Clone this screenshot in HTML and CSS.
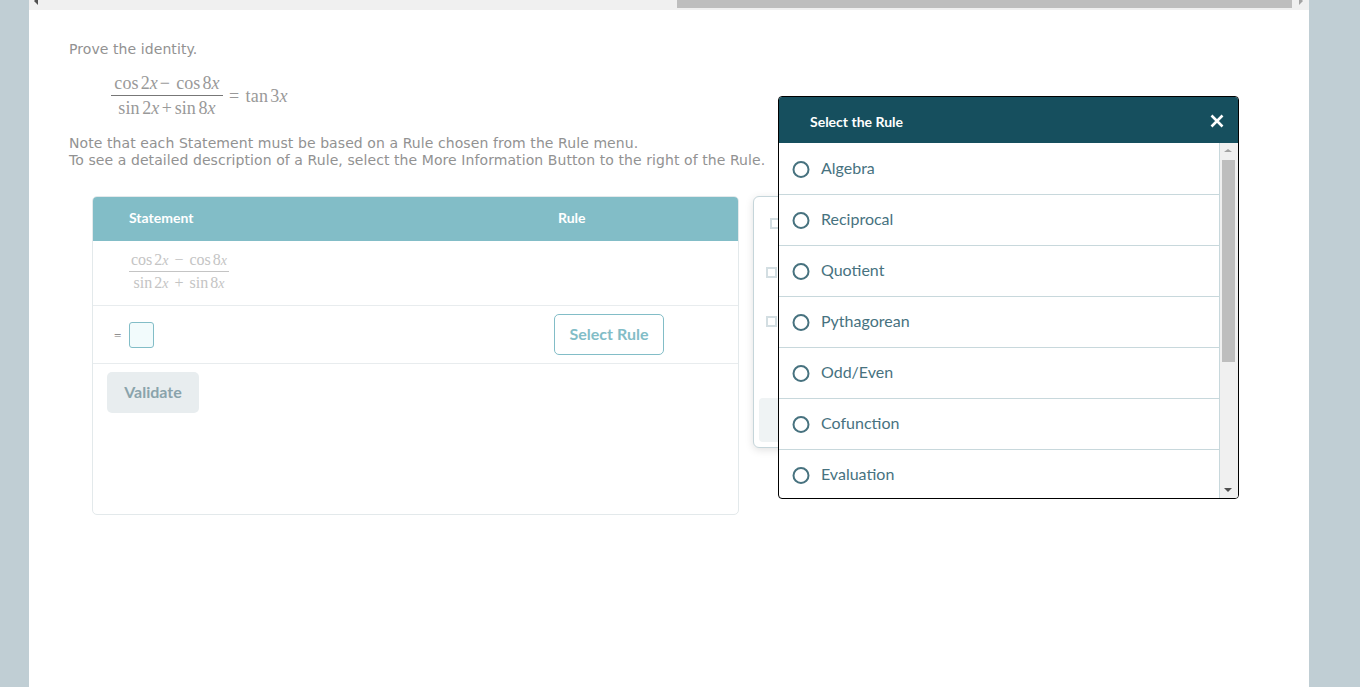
FILE: index.html
```html
<!DOCTYPE html>
<html lang="en">
<head>
  <meta charset="UTF-8" />
  <title>Prove the identity</title>
  <link rel="stylesheet" href="styles.css">
</head>
<body>

<div class="page">
  <!-- Top scrollbar -->
  <div class="hscroll">
    <span class="arrow-left"></span>
    <span class="hscroll-thumb"></span>
    <span class="arrow-right"></span>
  </div>

  <div class="question">
    <p class="prompt">Prove the identity.</p>
    <div class="math identity">
      <span class="frac">
        <span class="num">cos<i class="sp"></i>2<em>x</em><i class="sp"></i>&minus;<i class="sp-w"></i>cos<i class="sp"></i>8<em>x</em></span>
        <span class="den">sin<i class="sp"></i>2<em>x</em><i class="sp"></i>+<i class="sp"></i>sin<i class="sp"></i>8<em>x</em></span>
      </span>
      <span class="rhs">=<i class="sp-w"></i>tan<i class="sp"></i>3<em>x</em></span>
    </div>
    <p class="note">Note that each Statement must be based on a Rule chosen from the Rule menu.<br>To see a detailed description of a Rule, select the More Information Button to the right of the Rule.</p>
  </div>

  <div class="work">
    <div class="proof">
      <div class="proof-head">
        <span class="col-statement">Statement</span>
        <span>Rule</span>
      </div>
      <div class="proof-row first-row">
        <div class="math given">
          <span class="frac">
            <span class="num">cos<i class="sp"></i>2<em>x</em><i class="sp-w"></i>&minus;<i class="sp-w"></i>cos<i class="sp"></i>8<em>x</em></span>
            <span class="den">sin<i class="sp"></i>2<em>x</em><i class="sp-w"></i>+<i class="sp-w"></i>sin<i class="sp"></i>8<em>x</em></span>
          </span>
        </div>
      </div>
      <div class="proof-row input-row">
        <div class="statement-input">
          <span class="equals">=</span>
          <span class="answer-box"></span>
        </div>
        <button class="btn-rule">Select Rule</button>
      </div>
      <button class="btn-validate">Validate</button>
    </div>

    <!-- Palette behind the dialog -->
    <div class="palette">
      <span class="check check-a"></span>
      <span class="check check-b"></span>
      <span class="check check-c"></span>
      <span class="palette-btn"></span>
    </div>
  </div>

  <!-- Rule dialog -->
  <div class="dialog">
    <div class="dialog-head">
      <span>Select the Rule</span>
      <svg class="close" width="14" height="14" viewBox="0 0 14 14"><path d="M1.5 1.5L12.5 12.5M12.5 1.5L1.5 12.5" stroke="#fff" stroke-width="2.6" fill="none"/></svg>
    </div>
    <div class="dialog-body">
      <ul class="rules">
        <li><span class="radio"></span>Algebra</li>
        <li><span class="radio"></span>Reciprocal</li>
        <li><span class="radio"></span>Quotient</li>
        <li><span class="radio"></span>Pythagorean</li>
        <li><span class="radio"></span>Odd/Even</li>
        <li><span class="radio"></span>Cofunction</li>
        <li><span class="radio"></span>Evaluation</li>
      </ul>
      <div class="vscroll">
        <span class="arrow-up"></span>
        <span class="vscroll-thumb"></span>
        <span class="arrow-down"></span>
      </div>
    </div>
  </div>
</div>

</body>
</html>
```

FILE: styles.css
```css
/* Global styles */
html, body {
  height: 100%;
}

body {
  margin: 0;
  overflow: hidden;
  background-color: #c0ced4;
  font-family: "Lato", "Open Sans", sans-serif;
}

.page {
  position: relative;
  width: 1280px;
  height: 687px;
  margin-left: 29px;
  background-color: #fff;
}

/* Top scrollbar */
.hscroll {
  display: flex;
  height: 10px;
  background-color: #f0f0f0;
}

.hscroll-thumb {
  width: 615px;
  height: 8px;
  margin-left: 639px;
  background-color: #bebebe;
}

.arrow-left {
  width: 0;
  height: 0;
  margin-left: 5px;
  border-top: 4px solid transparent;
  border-bottom: 4px solid transparent;
  border-right: 4px solid #505050;
  transform: translateY(-3px);
}

.arrow-right {
  width: 0;
  height: 0;
  margin-left: 7px;
  border-top: 4px solid transparent;
  border-bottom: 4px solid transparent;
  border-left: 4px solid #a3a3a3;
  transform: translateY(-3px);
}

/* Question text */
.question {
  padding: 31px 0 0 40px;
  font-family: "DejaVu Sans", Verdana, sans-serif;
  font-size: 14px;
  letter-spacing: 0.08px;
  line-height: 17px;
  color: #929292;
}

.prompt {
  margin: 0;
}

.note {
  margin: 0;
  padding-top: 15px;
}

.math {
  font-family: "Liberation Serif", serif;
  letter-spacing: 0;
  color: #999;
}

.math em {
  font-style: italic;
}

.sp {
  display: inline-block;
  width: 2px;
}

.sp-w {
  display: inline-block;
  width: 6px;
}

.frac {
  display: inline-flex;
  flex-direction: column;
  align-items: center;
}

.num {
  border-bottom: 1px solid #777;
  align-self: stretch;
  text-align: center;
}

.identity {
  display: flex;
  align-items: center;
  margin: 13px 0 0 42px;
  font-size: 18px;
  letter-spacing: 0.1px;
  line-height: 24px;
}

.identity .frac {
  width: 112px;
}

.identity .num {
  height: 24px;
}

.identity .den .sp {
  width: 2.5px;
}

.identity .rhs {
  margin-left: 6px;
  letter-spacing: 0.25px;
}

/* Proof table */
.work {
  display: flex;
  align-items: flex-start;
  gap: 14px;
  padding: 27px 0 0 63px;
}

.proof {
  width: 645px;
  height: 317px;
  border: 1px solid #e3e9eb;
  border-radius: 5px;
  overflow: hidden;
}

.proof-head {
  display: flex;
  align-items: center;
  box-sizing: border-box;
  height: 44px;
  padding-bottom: 3px;
  background-color: #82bdc7;
  color: #fff;
  font-size: 14px;
  font-weight: 700;
}

.col-statement {
  width: 465px;
  padding-left: 36px;
  box-sizing: border-box;
}

.proof-row {
  display: flex;
  align-items: center;
  border-bottom: 1px solid #e8ecee;
}

.first-row {
  height: 65px;
  box-sizing: border-box;
  padding: 0 0 3px 36px;
}

.given {
  font-size: 16px;
  line-height: 22px;
  color: #c4c4c4;
}

.given .frac {
  width: 100px;
}

.given .num {
  height: 21px;
  line-height: 20px;
  border-bottom-color: #c4c4c4;
}

.given em {
  font-size: 14px;
}

.input-row {
  height: 57px;
  justify-content: space-between;
  padding: 0 74px 0 21px;
}

.statement-input {
  display: flex;
  align-items: center;
  gap: 8px;
}

.equals {
  padding-top: 2px;
  font-family: "Liberation Serif", serif;
  font-size: 13px;
  color: #777;
}

.answer-box {
  width: 23px;
  height: 24px;
  border: 1px solid #82bdc7;
  border-radius: 3px;
  background-color: #f2fbfc;
}

.btn-rule {
  width: 110px;
  height: 41px;
  padding: 0 0 2px;
  border: 1px solid #82bdc7;
  border-radius: 5px;
  background-color: #fff;
  color: #82bdc7;
  font-family: inherit;
  font-size: 16px;
  font-weight: 700;
}

.btn-validate {
  display: block;
  width: 92px;
  height: 41px;
  margin: 8px 0 0 14px;
  padding: 0 0 2px;
  border: 0;
  border-radius: 5px;
  background-color: #e8edef;
  color: #8aa3ab;
  font-family: inherit;
  font-size: 16px;
  font-weight: 700;
}

/* Palette behind the dialog */
.palette {
  position: relative;
  width: 100px;
  height: 250px;
  border: 1px solid #c5d5da;
  border-radius: 6px;
  background-color: #fff;
  box-shadow: 0 2px 8px rgba(0, 0, 0, 0.12);
}

.check {
  position: absolute;
  box-sizing: border-box;
  width: 11px;
  height: 11px;
  border: 2px solid #d3dee2;
  background-color: #fff;
}

.check-a {
  top: 21px;
  left: 16px;
}

.check-b {
  top: 70px;
  left: 12px;
}

.check-c {
  top: 119px;
  left: 12px;
}

.palette-btn {
  position: absolute;
  top: 201px;
  left: 5px;
  width: 60px;
  height: 44px;
  border-radius: 4px;
  background-color: #eff3f4;
}

/* Rule dialog */
.dialog {
  position: absolute;
  top: 96px;
  left: 749px;
  width: 459px;
  height: 401px;
  border: 1px solid #000;
  border-radius: 4px;
  overflow: hidden;
  background-color: #fff;
}

.dialog-head {
  display: flex;
  align-items: center;
  justify-content: space-between;
  height: 46px;
  padding: 2px 14px 0 31px;
  box-sizing: border-box;
  background-color: #164f5e;
  color: #fff;
  font-size: 14px;
  font-weight: 700;
}

.dialog-body {
  display: flex;
  height: 355px;
}

.rules {
  flex: 1;
  margin: 0;
  padding: 0;
  overflow: hidden;
  list-style: none;
}

.rules li {
  display: flex;
  align-items: center;
  gap: 11px;
  box-sizing: border-box;
  height: 51px;
  padding: 0 0 3px 14px;
  border-bottom: 1px solid #c8d8dc;
  color: #47727f;
  font-size: 16px;
}

.rules li:first-child {
  height: 52px;
  padding-top: 1px;
}

.radio {
  box-sizing: border-box;
  width: 17px;
  height: 17px;
  margin-top: 3px;
  border: 2.5px solid #47727f;
  border-radius: 50%;
  transform: translateX(-0.5px);
}

.vscroll {
  display: flex;
  flex-direction: column;
  align-items: center;
  box-sizing: border-box;
  width: 19px;
  padding-right: 2px;
  border-left: 1px solid #c8d8dc;
  background-color: #f0f0f0;
}

.vscroll-thumb {
  flex: none;
  width: 13px;
  height: 202px;
  margin-top: 8px;
  background-color: #bebebe;
}

.arrow-up {
  width: 0;
  height: 0;
  margin-top: 6px;
  border-left: 4px solid transparent;
  border-right: 4px solid transparent;
  border-bottom: 3px solid #a3a3a3;
}

.arrow-down {
  width: 0;
  height: 0;
  margin-top: auto;
  margin-bottom: 6px;
  border-left: 4px solid transparent;
  border-right: 4px solid transparent;
  border-top: 4px solid #505050;
}
```
